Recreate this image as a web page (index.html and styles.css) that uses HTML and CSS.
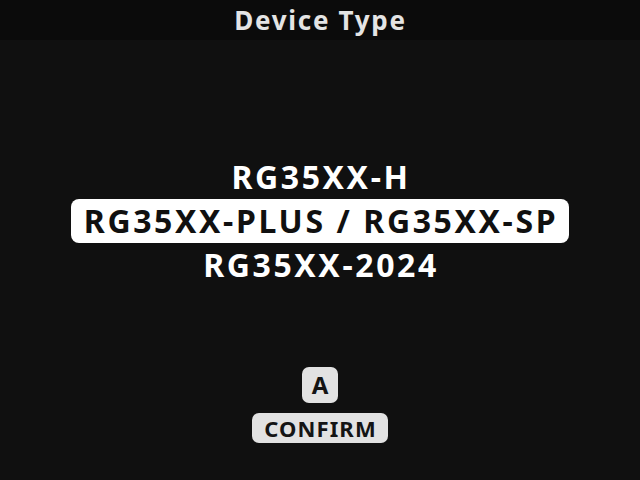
FILE: index.html
```html
<!DOCTYPE html>
<html>
<head>
<meta charset="utf-8">
<link rel="stylesheet" href="styles.css">
</head>
<body>
<div class="screen">
  <header class="title-bar">Device Type</header>
  <main class="menu">
    <div class="item">RG35XX-H</div>
    <div class="item selected">RG35XX-PLUS / RG35XX-SP</div>
    <div class="item">RG35XX-2024</div>
  </main>
  <footer class="hints">
    <span class="btn key">A</span>
    <span class="btn label">CONFIRM</span>
  </footer>
</div>
</body>
</html>
```
FILE: styles.css
```css
html, body {
  margin: 0;
  padding: 0;
  background: #101010;
}
.screen {
  width: 640px;
  height: 480px;
  display: flex;
  flex-direction: column;
  font-family: "Noto Sans", "DejaVu Sans", sans-serif;
  font-weight: 700;
  background: #101010;
}
.title-bar {
  height: 40px;
  background: #0b0b0b;
  color: #e4e4e4;
  font-size: 26px;
  line-height: 40px;
  text-align: center;
  letter-spacing: 1.7px;
  padding-left: 1px;
}
.menu {
  display: flex;
  flex-direction: column;
  align-items: center;
  padding-top: 115px;
}
.item {
  height: 44px;
  line-height: 44px;
  font-size: 32px;
  color: #ffffff;
  letter-spacing: 2.6px;
  padding: 0 11px 0 13px;
  border-radius: 8px;
}
.item.selected {
  background: #ffffff;
  color: #101010;
}
.hints {
  display: flex;
  flex-direction: column;
  align-items: center;
  gap: 10px;
  margin-top: 80px;
}
.btn {
  background: #e2e2e2;
  color: #141414;
  border-radius: 7px;
  font-size: 22px;
}
.key {
  width: 36px;
  height: 36px;
  line-height: 36px;
  text-align: center;
  font-size: 24px;
}
.label {
  height: 30px;
  line-height: 30px;
  padding: 0 11px 0 12px;
  letter-spacing: 1.1px;
}
```
